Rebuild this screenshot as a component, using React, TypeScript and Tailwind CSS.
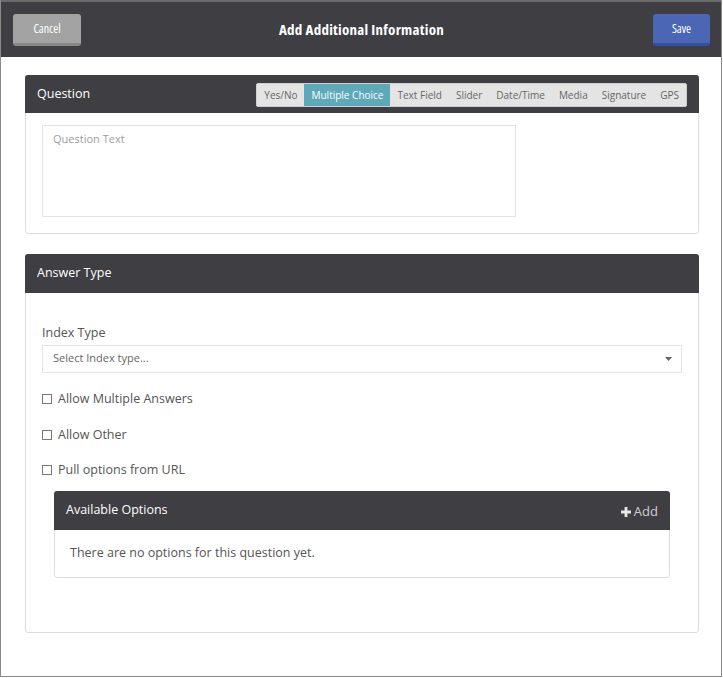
import React from "react";

const tabs = ["Yes/No", "Multiple Choice", "Text Field", "Slider", "Date/Time", "Media", "Signature", "GPS"];

function Check({ label }: { label: string }) {
  return (
    <label className="flex items-center gap-[6px] text-[12.5px] text-[#555] leading-none">
      <span className="w-[10px] h-[10px] border border-[#777] bg-white inline-block" />
      <span>{label}</span>
    </label>
  );
}

export default function App() {
  return (
    <div className="w-[723px] h-[678px] bg-white" style={{ fontFamily: '"Open Sans", "Noto Sans", sans-serif' }}>
      <div className="w-[722px] h-[677px] border-l border-r border-b border-[#8a8a8a] flex flex-col">
        {/* header */}
        <div className="h-[57px] bg-[#3f3e43] border-t-2 border-[#6a6a6a] flex items-center pl-[12px] pr-[11px] shrink-0">
          <div className="flex-1 flex">
            <button className="w-[68px] h-[32px] mt-[1px] rounded-[3px] bg-[#a3a3a3] border-b-[3px] border-[#888] text-white text-[12px] font-stretch-[85%] flex items-center justify-center">
              Cancel
            </button>
          </div>
          <div className="text-white font-bold text-[15px] tracking-[0.25px] font-stretch-[75%]">Add Additional Information</div>
          <div className="flex-1 flex justify-end">
            <button className="w-[57px] h-[32px] mt-[1px] rounded-[3px] bg-[#4a66b4] border-b-[3px] border-[#3450a0] text-white text-[12px] font-stretch-[85%] flex items-center justify-center">
              Save
            </button>
          </div>
        </div>

        <div className="flex flex-col px-[24px] pt-[18px]">
          {/* Question card */}
          <div className="border border-[#dcdcdc] rounded-[3px] w-[674px]">
            <div className="h-[38px] bg-[#3f3e43] flex items-center justify-between pl-[12px] pr-[12px] -mx-[1px] -mt-[1px] rounded-t-[3px]">
              <span className="text-white text-[12.5px]">Question</span>
              <div className="flex h-[24px] mt-[2px] bg-[#e4e4e4] rounded-[2px] border border-[#cfcfcf] overflow-hidden text-[10px] text-[#666]">
                {tabs.map((t) => (
                  <div
                    key={t}
                    className={
                      t === "Multiple Choice"
                        ? "px-[7px] flex items-center bg-[#5ea9b9] text-white"
                        : "px-[7px] flex items-center"
                    }
                  >
                    {t}
                  </div>
                ))}
              </div>
            </div>
            <div className="pt-[12px] pb-[16px] pl-[16px]">
              <div className="w-[474px] h-[92px] border border-[#e3e3e3] px-[10px] py-[5px] text-[11px] text-[#9d9d9d]">
                Question Text
              </div>
            </div>
          </div>

          {/* Answer Type card */}
          <div className="border border-[#dcdcdc] rounded-[3px] w-[674px] mt-[20px] h-[379px]">
            <div className="h-[39px] bg-[#3f3e43] flex items-center pl-[12px] -mx-[1px] -mt-[1px] rounded-t-[3px]">
              <span className="text-white text-[12.5px]">Answer Type</span>
            </div>
            <div className="px-[16px] pt-[34px]">
              <div className="text-[12.5px] text-[#555] leading-none">Index Type</div>
              <div className="mt-[5px] h-[28px] border border-[#e5e5e5] flex items-center justify-between pl-[10px] pr-[9px] text-[11px] text-[#666]">
                <span>Select Index type...</span>
                <svg width="7" height="4" viewBox="0 0 7 4"><path d="M0 0h7L3.5 4z" fill="#666" /></svg>
              </div>
              <div className="flex flex-col mt-[20px]">
                <Check label="Allow Multiple Answers" />
                <div className="mt-[24px]"><Check label="Allow Other" /></div>
                <div className="mt-[22px]"><Check label="Pull options from URL" /></div>
              </div>
              <div className="mt-[15px] ml-[12px] w-[616px] border border-[#dcdcdc] rounded-[3px]">
                <div className="h-[39px] bg-[#3f3e43] flex items-center justify-between pl-[12px] pr-[12px] -mx-[1px] -mt-[1px] rounded-t-[3px]">
                  <span className="text-white text-[12.5px]">Available Options</span>
                  <span className="text-[#cfcfcf] text-[13px] flex items-center gap-[3px] mt-[3px]">
                    <svg width="10" height="10" viewBox="0 0 10 10"><path d="M3.6 0h2.8v3.6H10v2.8H6.4V10H3.6V6.4H0V3.6h3.6z" fill="#e8e8e8" /></svg>
                    Add
                  </span>
                </div>
                <div className="h-[47px] flex items-center pl-[15px] text-[12.5px] text-[#555]">
                  There are no options for this question yet.
                </div>
              </div>
            </div>
          </div>
        </div>
      </div>
    </div>
  );
}
